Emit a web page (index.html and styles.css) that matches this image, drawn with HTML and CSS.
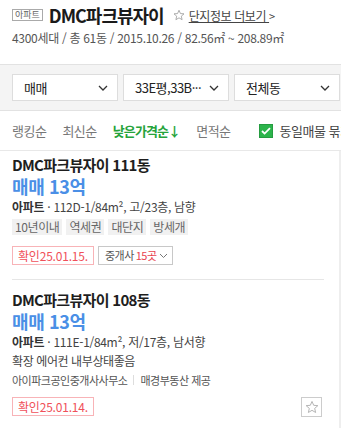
FILE: index.html
```html
<!DOCTYPE html>
<html lang="ko">
<head>
<meta charset="utf-8">
<link rel="stylesheet" href="styles.css">
</head>
<body>
<div class="panel">
  <header class="head">
    <div class="head-row">
      <span class="badge">아파트</span>
      <h1 class="title">DMC파크뷰자이</h1>
      <svg class="star" width="12" height="12" viewBox="0 0 24 24"><path d="M12 2.5l2.9 6.6 7.1.6-5.4 4.7 1.6 7-6.2-3.7-6.2 3.7 1.6-7L2 9.7l7.1-.6z" fill="none" stroke="#999" stroke-width="1.6" stroke-linejoin="round"/></svg>
      <a class="more">단지정보 더보기 <span class="gt">&gt;</span></a>
    </div>
    <div class="meta">4300세대 / 총 61동 / 2015.10.26 / 82.56㎡ ~ 208.89㎡</div>
  </header>

  <div class="filters">
    <div class="select"><span>매매</span><svg class="chev" width="10" height="6" viewBox="0 0 10 6"><path d="M1 1l4 4 4-4" fill="none" stroke="#333" stroke-width="1.3"/></svg></div>
    <div class="select"><span>33E평,33B···</span><svg class="chev" width="10" height="6" viewBox="0 0 10 6"><path d="M1 1l4 4 4-4" fill="none" stroke="#333" stroke-width="1.3"/></svg></div>
    <div class="select"><span>전체동</span><svg class="chev" width="10" height="6" viewBox="0 0 10 6"><path d="M1 1l4 4 4-4" fill="none" stroke="#333" stroke-width="1.3"/></svg></div>
  </div>

  <div class="sorts">
    <span class="sort">랭킹순</span><i class="bar"></i>
    <span class="sort">최신순</span><i class="bar"></i>
    <span class="sort on">낮은가격순↓</span><i class="bar"></i>
    <span class="sort">면적순</span>
    <span class="check"><svg width="10" height="8" viewBox="0 0 10 8"><path d="M1 4l2.6 2.6L9 1.2" fill="none" stroke="#fff" stroke-width="1.8"/></svg></span>
    <span class="check-label">동일매물 묶기</span>
  </div>

  <div class="list">
    <div class="item first">
      <div class="name">DMC파크뷰자이 111동</div>
      <div class="price">매매 13억</div>
      <div class="spec"><b>아파트</b> · 112D-1/84m², 고/23층, 남향</div>
      <div class="tags"><span>10년이내</span><span>역세권</span><span>대단지</span><span>방세개</span></div>
      <div class="foot">
        <span class="confirm">확인25.01.15.</span>
        <span class="agents">중개사 <em>15곳</em> <svg width="9" height="6" viewBox="0 0 9 6"><path d="M1 1l3.5 3.5L8 1" fill="none" stroke="#777" stroke-width="1"/></svg></span>
      </div>
    </div>
    <div class="item">
      <div class="name">DMC파크뷰자이 108동</div>
      <div class="price">매매 13억</div>
      <div class="spec"><b>아파트</b> · 111E-1/84m², 저/17층, 남서향</div>
      <div class="desc">확장 에어컨 내부상태좋음</div>
      <div class="agent">아이파크공인중개사사무소<i class="bar small"></i>매경부동산 제공</div>
      <div class="foot">
        <span class="confirm">확인25.01.14.</span>
        <span class="fav"><svg width="14" height="14" viewBox="0 0 24 24"><path d="M12 2.5l2.9 6.6 7.1.6-5.4 4.7 1.6 7-6.2-3.7-6.2 3.7 1.6-7L2 9.7l7.1-.6z" fill="none" stroke="#aaa" stroke-width="1.5" stroke-linejoin="round"/></svg></span>
      </div>
    </div>
  </div>
</div>
</body>
</html>
```
FILE: styles.css
```css
* { box-sizing: border-box; }
html, body { margin: 0; padding: 0; background: #fff; }
body {
  font-family: "Noto Sans CJK KR", "Noto Sans", sans-serif;
  color: #222;
  width: 341px;
  height: 428px;
  overflow: hidden;
}
.panel { width: 341px; }
.head { padding: 4px 12px 0; height: 64px; }
.head-row { display: flex; align-items: center; height: 22px; white-space: nowrap; }
.badge {
  font-size: 9px; line-height: 10px; color: #666;
  border: 1px solid #aaa; padding: 0 2px; margin-right: 6px;
}
.title { font-size: 18px; font-weight: 700; margin: 0; letter-spacing: -1px; line-height: 22px; color: #1a1a1a; }
.star { margin: 0 4px 0 9px; }
.more { font-size: 12px; color: #444; text-decoration: underline; letter-spacing: -0.4px; }
.gt { font-size: 11px; text-decoration: none; display: inline-block; }
.meta { font-size: 12px; color: #555; line-height: 16px; margin-top: 4px; letter-spacing: -0.3px; white-space: nowrap; }

.filters {
  display: flex; gap: 5px;
  background: #f4f4f4;
  border-top: 1px solid #e2e2e2; border-bottom: 1px solid #e2e2e2;
  padding: 9px 2px 9px 12px;
  height: 47px;
}
.select {
  flex: 0 0 106px; height: 27px;
  background: #fff; border: 1px solid #ddd;
  display: flex; align-items: center; justify-content: space-between;
  padding: 0 9px 0 11px;
  font-size: 13px; color: #222; letter-spacing: -0.5px;
}
.chev { flex: none; }

.sorts {
  display: flex; align-items: center; height: 40px;
  padding: 0 0 0 12px; font-size: 13px; color: #777; letter-spacing: -0.5px;
  white-space: nowrap; border-bottom: 1px solid #e8e8e8; overflow: hidden;
}
.bar { display: inline-block; width: 1px; height: 11px; background: #ddd; margin: 0 8px; }
.sort.on { color: #25a33b; font-weight: 700; letter-spacing: -0.9px; }
.check {
  width: 14px; height: 14px; background: #2cb44b; border: 1px solid #259c40;
  display: inline-flex; align-items: center; justify-content: center;
  margin-left: 28px; margin-right: 7px; flex: none;
}
.check-label { color: #444; }

.list { border-right: 2px solid #eee; height: 278px; }
.item { margin: 0 15px 0 12px; padding: 10px 0 14px; border-bottom: 1px solid #e6e6e6; }
.item.first { padding-top: 4px; }
.name { font-size: 15px; font-weight: 700; line-height: 20px; letter-spacing: -0.7px; color: #1e1e1e; }
.price { font-size: 18px; font-weight: 700; line-height: 22px; color: #4a8fe6; letter-spacing: -0.4px; }
.spec { font-size: 12px; line-height: 19px; color: #444; letter-spacing: -0.3px; white-space: nowrap; }
.spec b { font-size: 12px; color: #333; letter-spacing: -0.3px; }
.desc { font-size: 12px; line-height: 19px; color: #444; letter-spacing: -0.4px; }
.agent { font-size: 11px; line-height: 20px; color: #555; letter-spacing: -0.5px; display: flex; align-items: center; }
.bar.small { height: 10px; margin: 0 6px; }
.tags { display: flex; gap: 4px; margin-top: 3px; }
.tags span { background: #f1f1f1; color: #666; font-size: 12px; line-height: 16px; padding: 0 3px; letter-spacing: -0.4px; }
.foot { display: flex; align-items: center; gap: 4px; margin-top: 11px; height: 19px; }
.item:not(.first) .foot { margin-top: 7px; }
.confirm {
  font-size: 12px; line-height: 17px; color: #f0505a; border: 1px solid #f8b3b7;
  padding: 0 5px; letter-spacing: -0.2px;
}
.agents {
  font-size: 11px; line-height: 17px; color: #555; border: 1px solid #c8c8c8;
  padding: 0 4px 0 6px; display: inline-flex; align-items: center; gap: 2px; letter-spacing: -0.5px;
}
.agents em { font-style: normal; color: #e8434f; }
.fav {
  margin-left: auto; width: 21px; height: 20px; border: 1px solid #ccc;
  display: inline-flex; align-items: center; justify-content: center; margin-right: 2px;
}
```
